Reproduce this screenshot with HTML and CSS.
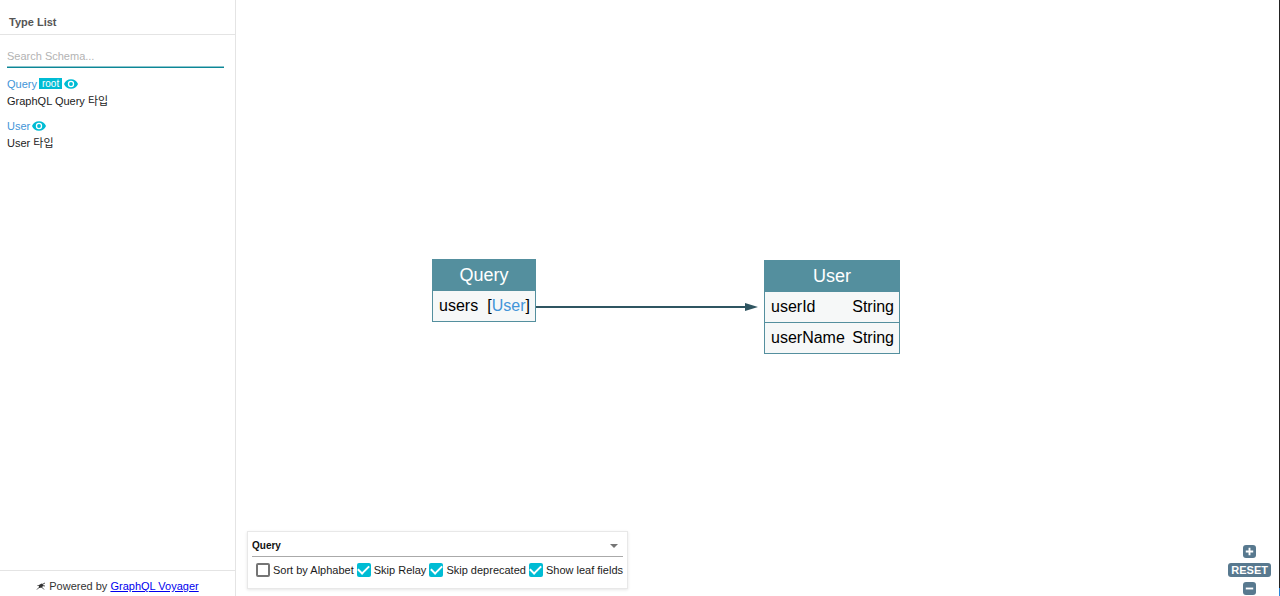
FILE: index.html
```html
<!DOCTYPE html>
<html lang="ko">
<head>
<meta charset="utf-8">
<title>GraphQL Voyager</title>
<link rel="stylesheet" href="styles.css">
</head>
<body>
<div class="app">
  <aside class="sidebar">
    <h1 class="sidebar-title">Type List</h1>
    <div class="sidebar-body">
      <input class="search" type="search" placeholder="Search Schema..." aria-label="Search Schema">
      <ul class="types">
        <li class="type">
          <div class="type-head">
            <a class="type-name" href="#query">Query</a>
            <span class="root-tag">root</span>
            <button class="eye" aria-label="Focus Query"><svg viewBox="1 1 22 22"><path d="M12 4.500C7 4.500 2.730 7.610 1 12c1.730 4.390 6 7.500 11 7.500s9.270-3.110 11-7.500C21.270 7.610 17 4.500 12 4.500zM12 17a5 5 0 1 1 0-10 5 5 0 0 1 0 10zm0-8a3 3 0 1 0 0 6 3 3 0 0 0 0-6z"/></svg></button>
          </div>
          <p class="type-text">GraphQL Query 타입</p>
        </li>
        <li class="type">
          <div class="type-head">
            <a class="type-name" href="#user">User</a>
            <button class="eye" aria-label="Focus User"><svg viewBox="1 1 22 22"><path d="M12 4.500C7 4.500 2.730 7.610 1 12c1.730 4.390 6 7.500 11 7.500s9.270-3.110 11-7.500C21.270 7.610 17 4.500 12 4.500zM12 17a5 5 0 1 1 0-10 5 5 0 0 1 0 10zm0-8a3 3 0 1 0 0 6 3 3 0 0 0 0-6z"/></svg></button>
          </div>
          <p class="type-text">User 타입</p>
        </li>
      </ul>
    </div>
    <footer class="powered">
      <svg class="satellite" viewBox="0 0 10 10"><path d="M1 8.500L4 5.500M5.500 6L8 8.500M1.500 4.500L4 4.800M6 3.500l3-1.500M6 4.500l3 .5" fill="none" stroke="#555" stroke-width="1"/><path d="M3 4l2.500-1.500L7.500 4 6 6.500l-3 .5z" fill="#333"/></svg>
      <span>Powered by <a href="#voyager">GraphQL Voyager</a></span>
    </footer>
  </aside>

  <main class="canvas">
    <table class="node node-query" id="query">
      <thead><tr><th colspan="2">Query</th></tr></thead>
      <tbody><tr><td>users</td><td class="kind">[<a href="#user">User</a>]</td></tr></tbody>
    </table>
    <svg class="edge" viewBox="0 0 222 10" aria-hidden="true"><path d="M0 5h210" stroke="#2f5561" stroke-width="2"/><path d="M209 1l13 4-13 4z" fill="#2f5561"/></svg>
    <table class="node node-user" id="user">
      <thead><tr><th colspan="2">User</th></tr></thead>
      <tbody>
        <tr><td>userId</td><td class="kind">String</td></tr>
        <tr><td>userName</td><td class="kind">String</td></tr>
      </tbody>
    </table>

    <section class="settings">
      <div class="root-picker">
        <select class="root-select" aria-label="Root type"><option>Query</option><option>User</option></select>
        <svg class="caret" viewBox="0 0 8 4"><path d="M0 0h8L4 4z"/></svg>
      </div>
      <div class="options">
        <label class="option"><input type="checkbox">Sort by Alphabet</label>
        <label class="option"><input type="checkbox" checked>Skip Relay</label>
        <label class="option"><input type="checkbox" checked>Skip deprecated</label>
        <label class="option"><input type="checkbox" checked>Show leaf fields</label>
      </div>
    </section>

    <div class="zoom">
      <button class="zoom-button" aria-label="Zoom in"><svg viewBox="0 0 14 14"><path d="M7 3v8M3 7h8"/></svg></button>
      <button class="zoom-reset">RESET</button>
      <button class="zoom-button" aria-label="Zoom out"><svg viewBox="0 0 14 14"><path d="M3 7h8"/></svg></button>
    </div>
  </main>
  <div class="window-edge"></div>
</div>
</body>
</html>
```

FILE: styles.css
```css
* { box-sizing: border-box; }

body {
  margin: 0;
  font: 11px/16px "Liberation Sans", "Noto Sans CJK KR", sans-serif;
  color: #1b1b1b;
  background: #fff;
}

button { border: 0; padding: 0; font: inherit; cursor: pointer; }
svg { display: block; }

.app { display: flex; height: 100vh; }

/* Sidebar */
.sidebar {
  display: flex;
  flex-direction: column;
  width: 236px;
  flex: none;
  border-right: 1px solid #e4e4e4;
}
.sidebar-title {
  margin: 0;
  padding: 14px 9px 4px;
  font-size: 11px;
  line-height: 16px;
  color: #555;
  border-bottom: 1px solid #e4e4e4;
}
.sidebar-body { flex: 1; padding: 11px 11px 0 7px; }
.search {
  display: block;
  width: 100%;
  height: 22px;
  padding: 0 0 1px;
  border: 0;
  border-bottom: 1px solid #0b8797;
  box-shadow: inset 0 -1px #8cc5cd;
  outline: 0;
  appearance: none;
  font: inherit;
  background: none;
}
.search::placeholder { color: #b3b3b3; opacity: 1; }
.types { margin: 0; padding: 7px 0 0; list-style: none; }
.type { margin-bottom: 7px; }
.type-head { display: flex; align-items: center; height: 17px; gap: 2px; }
.type-name { color: #4295d8; text-decoration: none; }
.root-tag {
  padding: 0 3px;
  font-size: 10px;
  line-height: 11px;
  color: #fff;
  background: #00bcd4;
}
.eye { width: 14px; height: 14px; background: none; }
.eye svg { width: 14px; height: 14px; fill: #00bcd4; }
.type-text { margin: 0; line-height: 18px; }
.powered {
  display: flex;
  justify-content: center;
  align-items: center;
  gap: 3px;
  height: 26px;
  padding-top: 5px;
  border-top: 1px solid #e4e4e4;
  color: #333;
}
.powered a { color: #00e; }
.satellite { width: 10px; height: 10px; }

/* Graph */
.canvas { position: relative; flex: 1; overflow: hidden; }
.node {
  position: absolute;
  border-collapse: collapse;
  font-size: 16px;
  line-height: 18px;
  color: #000;
  background: #f6f8f8;
}
.node-query { left: 196px; top: 259px; width: 104px; }
.node-user { left: 528px; top: 260px; width: 136px; }
.node th {
  height: 31px;
  padding: 0;
  font-size: 18px;
  font-weight: normal;
  color: #fff;
  background: #548f9e;
}
.node th, .node tr { border: 1px solid #548f9e; }
.node td { height: 31px; padding: 0 0 0 6px; }
.node .kind { padding-right: 5px; text-align: right; }
.node a { color: #4295d8; text-decoration: none; }
.edge { position: absolute; left: 300px; top: 302px; width: 222px; height: 10px; }

/* Display options */
.settings {
  position: absolute;
  left: 11px;
  bottom: 7px;
  width: 381px;
  padding: 4px;
  border: 1px solid #e8e8e8;
  box-shadow: 0 1px 3px rgba(0, 0, 0, 0.1);
  background: #fff;
}
.root-picker { display: flex; align-items: center; border-bottom: 1px solid #aaa; }
.root-select {
  flex: 1;
  height: 20px;
  padding: 0;
  border: 0;
  appearance: none;
  font: bold 10px/16px "Liberation Sans", sans-serif;
  color: #111;
  background: none;
}
.caret { width: 8px; height: 4px; margin-right: 5px; fill: #757575; }
.options { display: flex; justify-content: space-between; padding: 5px 0 6px 4px; }
.option { display: flex; align-items: center; gap: 3px; white-space: nowrap; }
.option input {
  appearance: none;
  width: 14px;
  height: 14px;
  margin: 0;
  border: 2px solid #757575;
  border-radius: 2px;
}
.option input:checked { display: grid; place-items: center; border: 0; background: #00bcd4; }
.option input:checked::after {
  content: "";
  width: 9px;
  height: 5px;
  margin-bottom: 3px;
  border: solid #fff;
  border-width: 0 0 2px 2px;
  transform: rotate(-45deg);
}

/* Zoom controls */
.zoom {
  position: absolute;
  right: 8px;
  bottom: 1px;
  display: flex;
  flex-direction: column;
  align-items: center;
  gap: 5px;
}
.zoom button { border-radius: 3px; color: #fff; background: #58798f; }
.zoom-button { width: 13px; height: 13px; }
.zoom-button svg { width: 13px; height: 13px; stroke: #fff; stroke-width: 2; }
.zoom .zoom-reset { padding: 0 3px; font-weight: bold; line-height: 14px; }

.window-edge {
  flex: none;
  width: 1px;
  background: linear-gradient(#222 0 calc(100% - 8px), #2a86dc 0);
}
```
